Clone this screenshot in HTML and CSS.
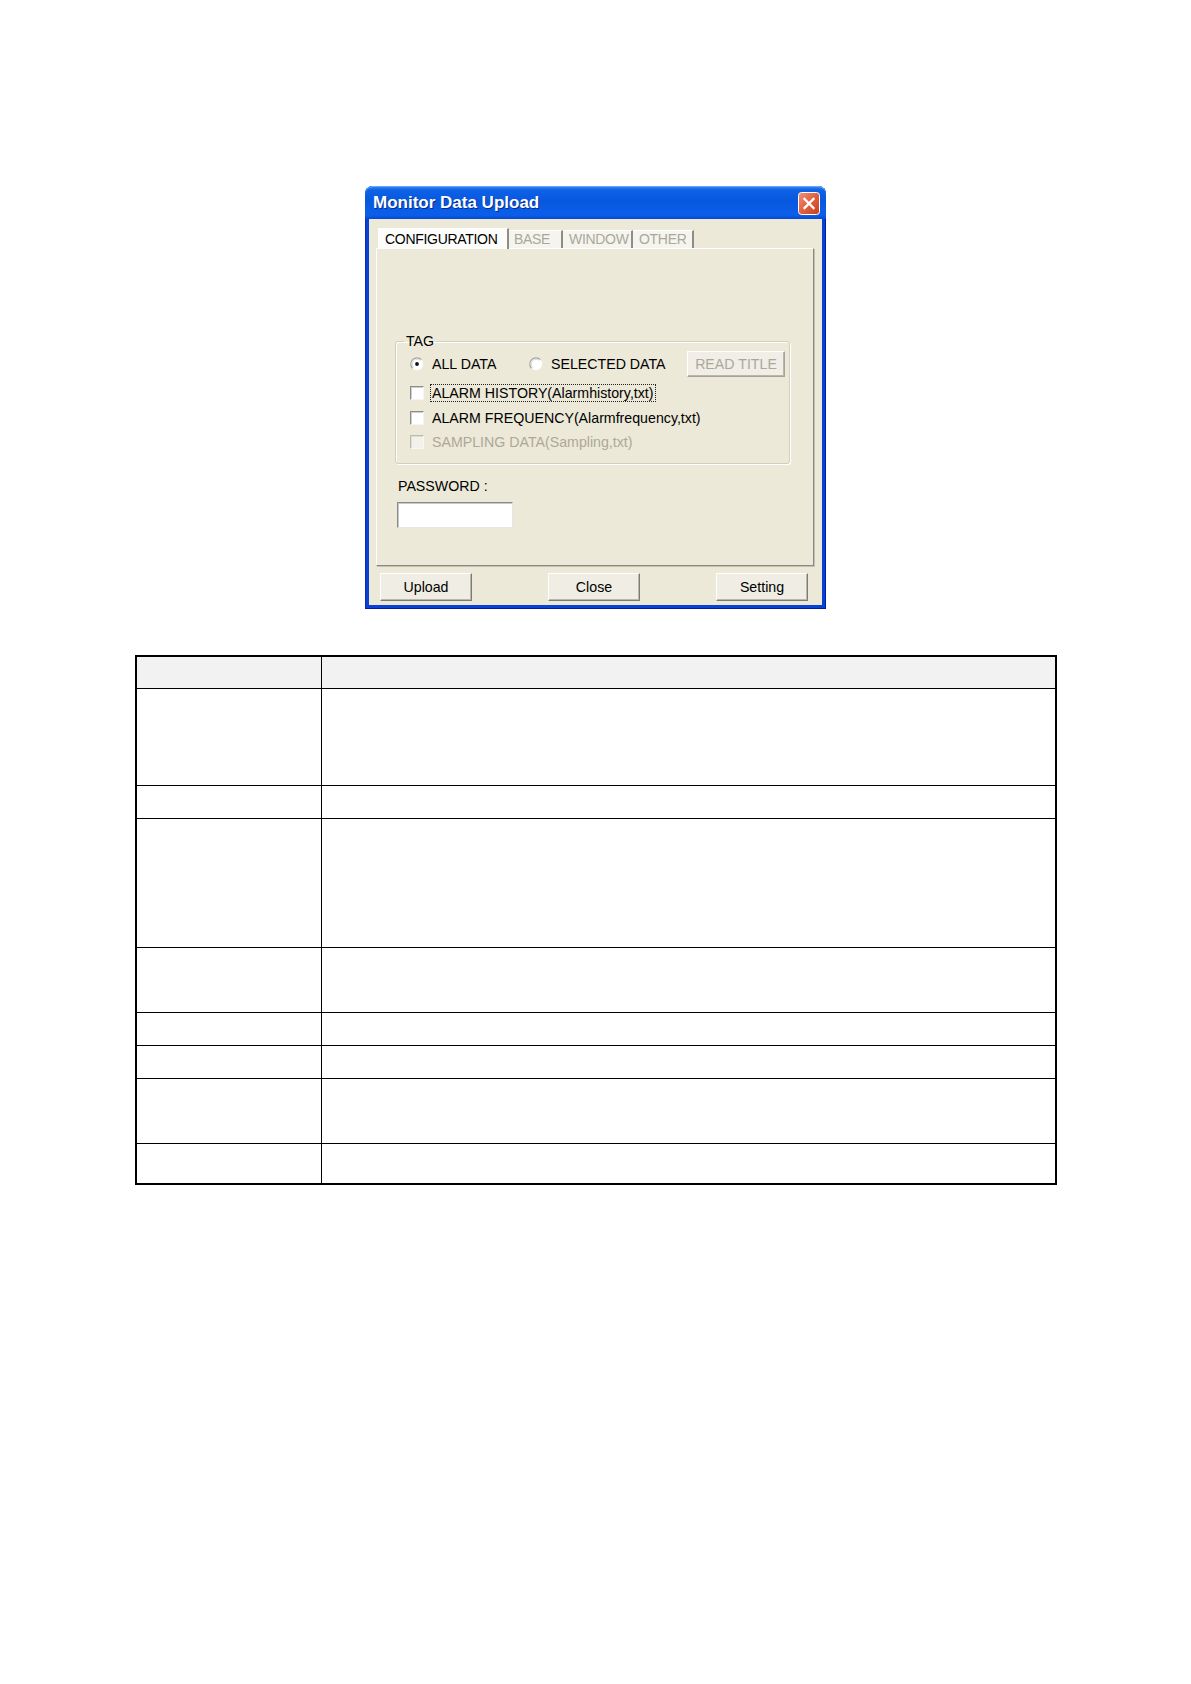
FILE: index.html
```html
<!DOCTYPE html>
<html lang="en">
<head>
<meta charset="utf-8">
<title>Monitor Data Upload</title>
<link rel="stylesheet" href="styles.css">
</head>
<body>
<div class="page">
  <div class="window">
    <div class="titlebar">
      <span class="title">Monitor Data Upload</span>
      <span class="close-btn">
        <svg width="22" height="23" viewBox="0 0 22 23">
          <defs>
            <linearGradient id="cg" x1="0" y1="0" x2="1" y2="1">
              <stop offset="0" stop-color="#f0937a"/>
              <stop offset="0.5" stop-color="#e0603f"/>
              <stop offset="1" stop-color="#c23f1d"/>
            </linearGradient>
          </defs>
          <rect x="0.5" y="0.5" width="21" height="22" rx="3" ry="3" fill="url(#cg)" stroke="#ffffff" stroke-width="1"/>
          <path d="M6.5 7 L15.5 16 M15.5 7 L6.5 16" stroke="#ffffff" stroke-width="2.3" stroke-linecap="square"/>
        </svg>
      </span>
    </div>
    <div class="client">
      <div class="tabs">
        <div class="tab tab-active tab-config">CONFIGURATION</div>
        <div class="tab tab-base">BASE</div>
        <div class="tab tab-window">WINDOW</div>
        <div class="tab tab-other">OTHER</div>
      </div>
      <div class="panel">
        <fieldset class="group">
          <legend class="group-title">TAG</legend>
          <div class="radio-row">
            <div class="radio-item radio-first">
              <svg class="radio" width="14" height="14" viewBox="0 0 14 14">
                <circle cx="7" cy="7" r="6.2" fill="#ffffff"/>
                <path d="M2.6 11.4 A6.2 6.2 0 0 1 11.4 2.6" stroke="#a4a4a4" stroke-width="1.2" fill="none"/>
                <path d="M3.6 10.4 A4.8 4.8 0 0 1 10.4 3.6" stroke="#d8d8d8" stroke-width="1" fill="none"/>
                <circle cx="7" cy="7" r="1.9" fill="#111111"/>
              </svg>
              <span class="label">ALL DATA</span>
            </div>
            <div class="radio-item">
              <svg class="radio" width="14" height="14" viewBox="0 0 14 14">
                <circle cx="7" cy="7" r="6.2" fill="#ffffff"/>
                <path d="M2.6 11.4 A6.2 6.2 0 0 1 11.4 2.6" stroke="#a4a4a4" stroke-width="1.2" fill="none"/>
                <path d="M3.6 10.4 A4.8 4.8 0 0 1 10.4 3.6" stroke="#d8d8d8" stroke-width="1" fill="none"/>
              </svg>
              <span class="label">SELECTED DATA</span>
            </div>
            <div class="btn btn-small btn-disabled">READ TITLE</div>
          </div>
          <div class="check-row">
            <span class="checkbox"></span>
            <span class="label label-focus">ALARM HISTORY(Alarmhistory,txt)</span>
          </div>
          <div class="check-row">
            <span class="checkbox"></span>
            <span class="label">ALARM FREQUENCY(Alarmfrequency,txt)</span>
          </div>
          <div class="check-row">
            <span class="checkbox checkbox-disabled"></span>
            <span class="label label-disabled">SAMPLING DATA(Sampling,txt)</span>
          </div>
        </fieldset>
        <div class="pw-label">PASSWORD :</div>
        <div class="pw-input"></div>
      </div>
      <div class="buttons">
        <div class="btn">Upload</div>
        <div class="btn">Close</div>
        <div class="btn">Setting</div>
      </div>
    </div>
  </div>

  <div class="info-table">
    <div class="cell cell-head cell-left"></div><div class="cell cell-head"></div>
    <div class="cell cell-left h97"></div><div class="cell h97"></div>
    <div class="cell cell-left h33"></div><div class="cell h33"></div>
    <div class="cell cell-left h129"></div><div class="cell h129"></div>
    <div class="cell cell-left h65"></div><div class="cell h65"></div>
    <div class="cell cell-left h33"></div><div class="cell h33"></div>
    <div class="cell cell-left h33"></div><div class="cell h33"></div>
    <div class="cell cell-left h65"></div><div class="cell h65"></div>
    <div class="cell cell-left cell-last"></div><div class="cell cell-last"></div>
  </div>
</div>
</body>
</html>
```
FILE: styles.css
```css
* {
  box-sizing: border-box;
}

html, body {
  margin: 0;
  padding: 0;
  background: #ffffff;
}

body {
  font-family: "Liberation Sans", Arial, sans-serif;
  font-size: 14.2px;
  color: #000000;
}

.page {
  width: 1191px;
  padding-top: 186px;
  padding-bottom: 40px;
}

/* ---------- window ---------- */
.window {
  width: 461px;
  margin: 0 auto;
  background: #0842d4;
  border-radius: 8px 8px 0 0;
  padding: 0 4px 4px 4px;
  box-shadow: inset 1px 0 0 #0a2fa8, inset -1px 0 0 #001b9c, inset 0 -1px 0 #001b9c;
}

.titlebar {
  height: 33px;
  margin: 0 -4px;
  padding: 0 6px 0 8px;
  display: flex;
  align-items: center;
  justify-content: space-between;
  border-radius: 8px 8px 0 0;
  background: linear-gradient(to bottom,
    #3d8df5 0%,
    #0d62e6 12%,
    #0758df 45%,
    #0a5ee8 80%,
    #0b5de6 90%,
    #0547d4 100%);
  box-shadow: inset 0 1px 0 #6aa8ff;
}

.title {
  font-family: "Liberation Sans", Arial, sans-serif;
  font-weight: bold;
  font-size: 17px;
  color: #ffffff;
  text-shadow: 1px 1px 0 #0a2a8c;
}

.close-btn {
  display: block;
  width: 22px;
  height: 23px;
  align-self: flex-start;
  margin-top: 6px;
}

.close-btn svg {
  display: block;
}

.client {
  height: 386px;
  background: #ece9d8;
  padding: 9px 8px 0 7px;
  display: flex;
  flex-direction: column;
}

/* ---------- tabs ---------- */
.tabs {
  height: 20px;
  display: flex;
  align-items: flex-end;
  padding-left: 2px;
}

.tab {
  height: 18px;
  line-height: 16px;
  padding-left: 6px;
  white-space: nowrap;
  background: #f5f4ee;
  color: #aca899;
  border-top: 1px solid #ffffff;
  border-right: 2px solid #8e8e86;
  font-size: 14px;
  letter-spacing: -0.3px;
}

.tab-active {
  position: relative;
  z-index: 2;
  height: 21px;
  margin-bottom: -1px;
  padding-top: 2px;
  background: #fcfcfa;
  color: #000000;
  border-left: 1px solid #ffffff;
  padding-left: 6px;
}

.tab-config { width: 131px; }
.tab-base { width: 54px; padding-left: 5px; }
.tab-window { width: 70px; padding-left: 6px; }
.tab-other { width: 61px; }

/* ---------- panel ---------- */
.panel {
  height: 318px;
  width: 438px;
  border: 1px solid;
  border-color: #ffffff #8a8a82 #8a8a82 #ffffff;
  box-shadow: 1px 1px 0 #c4c1b2;
  background: #ece9d8;
  padding: 84px 23px 0 0;
}

.group {
  margin: 0 0 0 18px;
  padding: 0 4px 8px 14px;
  border: 1px solid #d0d0bf;
  border-radius: 3px;
  box-shadow: 1px 1px 0 #ffffff, inset 1px 1px 0 #ffffff;
}

.group-title {
  margin-left: -6px;
  padding: 0 2px;
  line-height: 16px;
}

.radio-row {
  height: 26px;
  margin-top: 2px;
  display: flex;
  align-items: center;
}

.radio-item {
  display: flex;
  align-items: center;
}

.radio-first {
  width: 119px;
}

.radio {
  display: block;
  flex: none;
  margin-right: 6px;
}

.label {
  line-height: 16px;
  padding: 0 1px;
  border: 1px solid transparent;
  white-space: nowrap;
}

.label-focus {
  border: 1px dotted #222222;
}

.label-disabled {
  color: #aca899;
}

.check-row {
  height: 24.6px;
  display: flex;
  align-items: center;
}

.radio-row + .check-row {
  margin-top: 4px;
}

.checkbox {
  width: 14px;
  height: 14px;
  flex: none;
  margin-right: 6px;
  background: #ffffff;
  border: 1px solid;
  border-color: #8c8c8c #f4f4f4 #f4f4f4 #8c8c8c;
  box-shadow: inset 1px 1px 0 #cfcfcf;
}

.checkbox-disabled {
  background: #f2f1ea;
  border-color: #bdbbb0 #f8f8f4 #f8f8f4 #bdbbb0;
  box-shadow: inset 1px 1px 0 #e0ded4;
}

/* ---------- buttons ---------- */
.btn {
  width: 92px;
  height: 28px;
  line-height: 26px;
  text-align: center;
  background: #efede4;
  border: 1px solid;
  border-color: #ffffff #7d7d78 #7d7d78 #ffffff;
  box-shadow: inset -1px -1px 0 #b9b7aa;
  white-space: nowrap;
}

.btn-small {
  width: 98px;
  height: 26px;
  line-height: 24px;
  margin-left: auto;
}

.btn-disabled {
  color: #aca899;
  background: #f0eee6;
  border-color: #ffffff #a4a39c #a4a39c #ffffff;
}

.pw-label {
  margin: 14px 0 0 21px;
  line-height: 16px;
}

.pw-input {
  width: 116px;
  height: 26px;
  margin: 8px 0 0 20px;
  background: #ffffff;
  border: 1px solid;
  border-color: #8a8a8a #e6e6e6 #e6e6e6 #8a8a8a;
  box-shadow: inset 1px 1px 0 #c8c8c8;
}

.buttons {
  margin-top: 7px;
  display: flex;
  justify-content: space-between;
  padding: 0 6px 0 4px;
}

/* ---------- table ---------- */
.info-table {
  width: 922px;
  margin: 46px auto 0;
  border: 2px solid #000000;
  display: grid;
  grid-template-columns: 185px 1fr;
}

.cell {
  border-bottom: 1px solid #000000;
  background: #ffffff;
}

.cell-left {
  border-right: 1px solid #000000;
}

.cell-head {
  height: 32px;
  background: #f2f2f2;
}

.h97 { height: 97px; }
.h33 { height: 33px; }
.h129 { height: 129px; }
.h65 { height: 65px; }

.cell-last {
  height: 39px;
  border-bottom: none;
}
```
